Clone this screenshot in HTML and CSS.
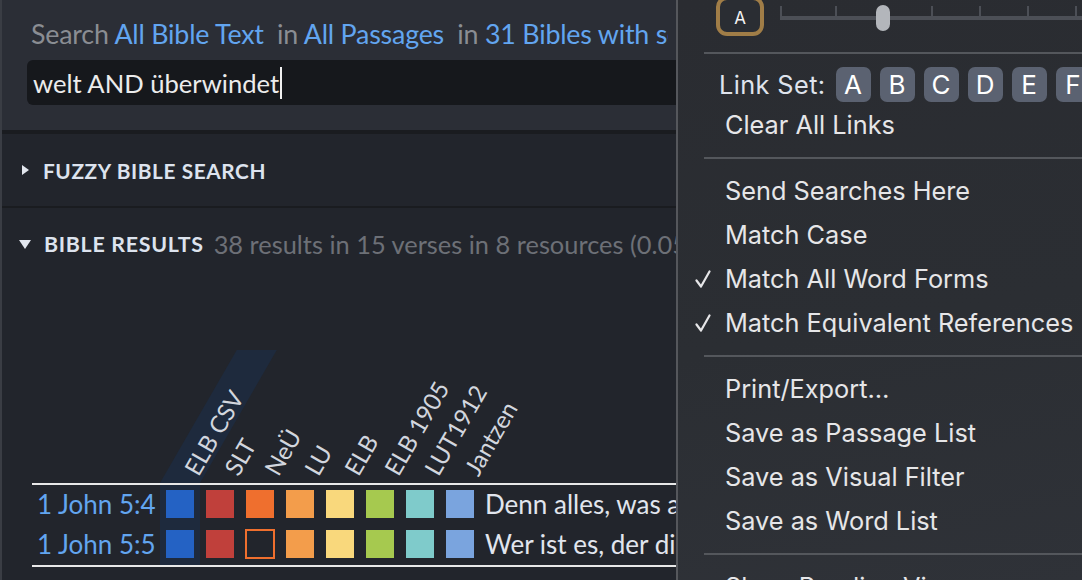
FILE: index.html
```html
<!DOCTYPE html>
<html>
<head>
<meta charset="utf-8">
<link rel="stylesheet" href="styles.css">
</head>
<body>
<div class="app">
  <div class="panel">
    <div class="search">
      <div class="scope"><span class="muted">Search</span> <span class="link">All Bible Text</span>&nbsp; <span class="muted">in</span> <span class="link">All Passages</span>&nbsp; <span class="muted">in</span> <span class="link">31 Bibles with search fields</span></div>
      <div class="query"><span class="qtext">welt AND überwindet</span><span class="caret"></span></div>
    </div>
    <div class="strip"></div>
    <div class="section-head fuzzy"><span class="tri-right"></span><span class="head-title">FUZZY BIBLE SEARCH</span></div>
    <div class="divider"></div>
    <div class="results">
      <div class="section-head results-head"><span class="tri-down"></span><span class="head-title">BIBLE RESULTS</span><span class="count">38 results in 15 verses in 8 resources (0.05 seconds)</span></div>
      <div class="chart">
        <div class="labels">
          <div class="lcell hl"><span class="lab">ELB CSV</span></div>
          <div class="lcell"><span class="lab">SLT</span></div>
          <div class="lcell"><span class="lab">NeÜ</span></div>
          <div class="lcell"><span class="lab">LU</span></div>
          <div class="lcell"><span class="lab">ELB</span></div>
          <div class="lcell"><span class="lab">ELB 1905</span></div>
          <div class="lcell"><span class="lab">LUT1912</span></div>
          <div class="lcell"><span class="lab">Jantzen</span></div>
        </div>
        <div class="table">
          <div class="row">
            <div class="ref">1 John 5:4</div>
            <div class="cell hl"><span class="sq c1"></span></div>
            <div class="cell"><span class="sq c2"></span></div>
            <div class="cell"><span class="sq c3"></span></div>
            <div class="cell"><span class="sq c4"></span></div>
            <div class="cell"><span class="sq c5"></span></div>
            <div class="cell"><span class="sq c6"></span></div>
            <div class="cell"><span class="sq c7"></span></div>
            <div class="cell"><span class="sq c8"></span></div>
            <div class="verse">Denn alles, was aus Gott geboren ist, überwindet die Welt</div>
          </div>
          <div class="row">
            <div class="ref">1 John 5:5</div>
            <div class="cell hl"><span class="sq c1"></span></div>
            <div class="cell"><span class="sq c2"></span></div>
            <div class="cell"><span class="sq empty"></span></div>
            <div class="cell"><span class="sq c4"></span></div>
            <div class="cell"><span class="sq c5"></span></div>
            <div class="cell"><span class="sq c6"></span></div>
            <div class="cell"><span class="sq c7"></span></div>
            <div class="cell"><span class="sq c8"></span></div>
            <div class="verse">Wer ist es, der die Welt überwindet</div>
          </div>
        </div>
      </div>
    </div>
  </div>

  <div class="menu">
    <div class="menu-top">
      <div class="abtn">A</div>
      <div class="slider">
        <div class="track"></div>
        <span class="tick" style="left:0px"></span>
        <span class="tick" style="left:55px"></span>
        <span class="tick" style="left:151px"></span>
        <span class="tick" style="left:199px"></span>
        <span class="tick" style="left:247px"></span>
        <span class="tick" style="left:295px"></span>
        <span class="knob"></span>
      </div>
    </div>
    <div class="sep"></div>
    <div class="linkset">
      <span class="ls-label">Link Set:</span>
      <span class="lbtn">A</span><span class="lbtn">B</span><span class="lbtn">C</span><span class="lbtn">D</span><span class="lbtn">E</span><span class="lbtn">F</span>
    </div>
    <div class="item">Clear All Links</div>
    <div class="sep gap"></div>
    <div class="item">Send Searches Here</div>
    <div class="item">Match Case</div>
    <div class="item"><svg class="check" viewBox="0 0 16 18" width="16" height="18"><polyline points="1.5,10.5 6,16.5 14.5,1.5" fill="none" stroke="#e6e6e8" stroke-width="2.2" stroke-linecap="round" stroke-linejoin="round"/></svg>Match All Word Forms</div>
    <div class="item"><svg class="check" viewBox="0 0 16 18" width="16" height="18"><polyline points="1.5,10.5 6,16.5 14.5,1.5" fill="none" stroke="#e6e6e8" stroke-width="2.2" stroke-linecap="round" stroke-linejoin="round"/></svg>Match Equivalent References</div>
    <div class="sep gap"></div>
    <div class="item">Print/Export…</div>
    <div class="item">Save as Passage List</div>
    <div class="item">Save as Visual Filter</div>
    <div class="item">Save as Word List</div>
    <div class="sep gap"></div>
    <div class="item">Show Reading View</div>
  </div>
</div>
</body>
</html>
```
FILE: styles.css
```css
* { box-sizing: border-box; }
html, body { margin: 0; padding: 0; }
body {
  width: 1082px;
  height: 580px;
  overflow: hidden;
  background: #22252c;
  font-family: "Lato", "Noto Sans", sans-serif;
}
.app { position: relative; width: 1082px; height: 580px; overflow: hidden; }

.panel {
  width: 1082px;
  height: 580px;
  border-left: 2px solid #3a3d44;
  background: #22252c;
  display: flex;
  flex-direction: column;
}

.search {
  height: 130px;
  background: #2b2e36;
  padding: 18px 0 0 25px;
  flex: none;
}
.scope {
  width: 641px;
  overflow: hidden;
  font-size: 26.8px;
  line-height: 33px;
  padding-left: 4px;
  white-space: nowrap;
  letter-spacing: -0.2px;
}
.muted { color: #8a8d93; }
.link { color: #62a5f0; }
.query {
  margin-top: 9px;
  height: 45px;
  background: #16181c;
  border-radius: 6px;
  padding-left: 6px;
  display: flex;
  align-items: center;
  color: #ececec;
  font-size: 25.6px;
  white-space: nowrap;
}
.caret {
  display: inline-block;
  width: 2px;
  height: 32px;
  background: #f0f0f0;
  margin-left: 1px;
}

.strip { height: 4px; background: #1a1c20; flex: none; }
.divider { height: 2px; background: #1a1c20; flex: none; }

.section-head {
  display: flex;
  align-items: center;
  white-space: nowrap;
}
.fuzzy { height: 72px; padding-left: 20px; flex: none; }
.head-title {
  color: #dde3ee;
  font-weight: 700;
  font-size: 20.8px;
  letter-spacing: 0.6px;
}
.tri-right {
  width: 0; height: 0;
  border-top: 5px solid transparent;
  border-bottom: 5px solid transparent;
  border-left: 7px solid #e2e6ee;
  margin-right: 14px;
}
.tri-down {
  width: 0; height: 0;
  border-left: 6.5px solid transparent;
  border-right: 6.5px solid transparent;
  border-top: 9px solid #e2e6ee;
  margin-right: 13px;
}
.results { flex: 1; }
.results-head { height: 72px; padding-left: 17px; }
.results-head .head-title { font-size: 21.4px; letter-spacing: 0.7px; }
.count {
  color: #6d7077;
  font-size: 25.4px;
  margin-left: 10px;
}

.chart { padding-left: 30px; margin-top: 65px; }
.labels {
  display: flex;
  height: 138px;
  margin-left: 128px;
}
.lcell {
  width: 40px;
  flex: none;
  position: relative;
}
.lcell.hl::before {
  content: "";
  position: absolute;
  left: 0;
  bottom: 0;
  width: 40px;
  height: 133px;
  background: #1e2a3d;
  transform: skewX(-30deg);
  transform-origin: left bottom;
}
.lab {
  position: absolute;
  left: 41px;
  bottom: 4px;
  color: #d2d6de;
  font-size: 24px;
  line-height: 24px;
  white-space: nowrap;
  transform: rotate(-60deg);
  transform-origin: left bottom;
}

.table {
  border-top: 2px solid #e8e8e8;
  border-bottom: 2px solid #e8e8e8;
}
.row {
  display: flex;
  height: 40px;
  align-items: stretch;
  white-space: nowrap;
}
.ref {
  width: 128px;
  flex: none;
  padding-left: 5px;
  color: #62a5f0;
  font-size: 26px;
  line-height: 38px;
}
.cell {
  width: 40px;
  flex: none;
  padding: 5px 6px 0;
}
.cell.hl { background: #1e2a3d; }
.sq {
  display: block;
  width: 28px;
  height: 28px;
}
.c1 { background: #2462c4; }
.c2 { background: #c0403b; }
.c3 { background: #ef6f2e; }
.c4 { background: #f39d4b; }
.c5 { background: #f9d87c; }
.c6 { background: #a6c94f; }
.c7 { background: #7fcbcb; }
.c8 { background: #7aa4de; }
.sq.empty { border: 2px solid #ef6f2e; background: transparent; width: 30px; height: 30px; margin: -1px -1px 0; }
.verse {
  padding-left: 5px;
  color: #e1e5ee;
  font-size: 26px;
  line-height: 38px;
}

/* Popup menu */
.menu {
  position: absolute;
  left: 676px;
  top: 0;
  width: 420px;
  height: 580px;
  border-left: 2px solid #55575c;
  background: linear-gradient(170deg, #2a2c31 0%, #2b2e33 55%, #2f3238 100%);
  font-family: "Inter", "Roboto", sans-serif;
  color: #e6e6e8;
  overflow: hidden;
}
.menu-top {
  height: 52px;
  display: flex;
  align-items: flex-start;
}
.abtn {
  margin-left: 38px;
  margin-top: -4px;
  width: 48px;
  height: 40px;
  border: 4px solid #a07d47;
  border-radius: 11px;
  background: #2a2d33;
  color: #f2f2f2;
  font-size: 17px;
  display: flex;
  align-items: center;
  justify-content: center;
  padding-top: 3px;
  flex: none;
}
.slider {
  position: relative;
  margin-left: 16px;
  flex: 1;
  height: 40px;
}
.track {
  position: absolute;
  left: 0; right: 0;
  top: 16px;
  height: 4px;
  background: #4c4f56;
}
.tick {
  position: absolute;
  top: 6px;
  width: 2px;
  height: 12px;
  background: #4c4f56;
}
.knob {
  position: absolute;
  left: 96px;
  top: 5px;
  width: 14px;
  height: 26px;
  border-radius: 7px;
  background: #b3b6bb;
}
.sep {
  height: 2px;
  margin-left: 26px;
  background: #54575c;
}
.sep.gap { margin-top: 10px; margin-bottom: 10px; }
.linkset {
  display: flex;
  align-items: center;
  height: 49px;
  padding-top: 12px;
  padding-left: 41px;
  white-space: nowrap;
}
.ls-label {
  font-size: 25.3px;
  letter-spacing: 0.4px;
  color: #dfe3ec;
  margin-right: 10px;
}
.lbtn {
  width: 35px;
  height: 35px;
  border-radius: 7px;
  background: #5b6271;
  color: #ffffff;
  font-size: 26px;
  display: flex;
  align-items: center;
  justify-content: center;
  margin-right: 9px;
  flex: none;
}
.item {
  position: relative;
  height: 44px;
  line-height: 44px;
  padding-left: 47px;
  font-size: 25.3px;
  white-space: nowrap;
}
.check {
  position: absolute;
  left: 17px;
  top: 13px;
}
```
